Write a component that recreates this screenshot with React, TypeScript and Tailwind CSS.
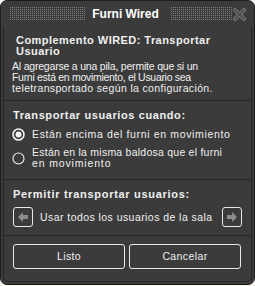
import React from "react";

const font = { fontFamily: '"Liberation Sans", Arial, sans-serif' };

function Stripe({ w }: { w: string }) {
  return (
    <div
      className={`${w} h-[14px] bg-[conic-gradient(#7c7c7c_25%,transparent_0)] bg-[length:2px_2px]`}
    />
  );
}

function Radio({ on }: { on: boolean }) {
  return (
    <svg width="13" height="13" viewBox="0 0 13 13" className="shrink-0">
      <circle cx="6.5" cy="6.5" r="5.5" fill="none" stroke="#f2f2f2" strokeWidth={on ? 1.6 : 1.1} />
      {on && <circle cx="6.5" cy="6.5" r="3" fill="#f2f2f2" />}
    </svg>
  );
}

function ArrowBtn({ dir }: { dir: "l" | "r" }) {
  return (
    <div className="w-[20px] h-[20px] shrink-0 border border-[#e8e8e8] rounded-[3px] flex items-center justify-center">
      <svg width="10" height="10" viewBox="0 0 10 10">
        {dir === "l" ? (
          <polygon points="0,5 5,0 5,3 10,3 10,7 5,7 5,10" fill="#8c8c8c" />
        ) : (
          <polygon points="10,5 5,0 5,3 0,3 0,7 5,7 5,10" fill="#8c8c8c" />
        )}
      </svg>
    </div>
  );
}

export default function App() {
  return (
    <div className="w-[255px] h-[286px] bg-[#f4f2ea]" style={font}>
      <div className="w-[255px] h-[285px] rounded-[7px] bg-[#3b3b3b] border border-[#1e1e1e] flex flex-col overflow-hidden text-[#f0f0f0]">
        {/* header */}
        <div className="h-[26px] flex items-center pl-[8px] pr-[8px] shrink-0">
          <Stripe w="w-[76px]" />
          <div className="flex-1 text-center text-[12px] font-bold text-white leading-none pr-[4px]">Furni Wired</div>
          <Stripe w="w-[62px]" />
          <svg width="13" height="13" viewBox="0 0 13 13" className="ml-[1px]">
            <path d="M2 2 L11 11 M11 2 L2 11" stroke="#6e6e6e" strokeWidth="4" strokeLinecap="square" />
            <path d="M2 2 L11 11 M11 2 L2 11" stroke="#4a4a4a" strokeWidth="1.5" strokeLinecap="square" />
          </svg>
        </div>
        {/* body */}
        <div className="flex-1 mx-[2px] mb-[2px] border-x border-b border-[#262626] rounded-b-[5px] flex flex-col">
          <div className="pl-[8px] pt-[8px] pb-[6px]">
            <div className="text-[11px] font-bold leading-[11px] pl-[4px] whitespace-nowrap">
              <div className="tracking-[0.45px]">Complemento WIRED: Transportar</div>
              <div className="tracking-[0.45px]">Usuario</div>
            </div>
            <div className="text-[10.5px] leading-[11px] mt-[4px] whitespace-nowrap">
              <div className="tracking-[-0.2px]">Al agregarse a una pila, permite que si un</div>
              <div className="tracking-[-0.3px]">Furni está en movimiento, el Usuario sea</div>
              <div className="tracking-[0.35px]">teletransportado según la configuración.</div>
            </div>
          </div>
          <div className="h-px bg-[#262626]" />
          <div className="pl-[9px] pt-[9px] h-[78px]">
            <div className="text-[11px] font-bold leading-[11px] tracking-[0.6px]">Transportar usuarios cuando:</div>
            <div className="flex items-center gap-[7px] mt-[7px] -ml-[1px]">
              <Radio on />
              <div className="text-[10.5px] leading-[11px] tracking-[0.65px] whitespace-nowrap">Están encima del furni en movimiento</div>
            </div>
            <div className="flex items-center gap-[7px] mt-[6px] -ml-[1px]">
              <Radio on={false} />
              <div className="text-[10.5px] leading-[11px] whitespace-nowrap">
                <div className="tracking-[0.24px]">Están en la misma baldosa que el furni</div>
                <div className="tracking-[0.85px]">en movimiento</div>
              </div>
            </div>
          </div>
          <div className="h-px bg-[#262626]" />
          <div className="px-[9px] pt-[9px] h-[55px]">
            <div className="text-[11px] font-bold leading-[11px] tracking-[0.7px]">Permitir transportar usuarios:</div>
            <div className="flex items-center mt-[7px]">
              <ArrowBtn dir="l" />
              <div className="flex-1 ml-[7px] text-[10.5px] leading-[11px] tracking-[0.44px] whitespace-nowrap">Usar todos los usuarios de la sala</div>
              <ArrowBtn dir="r" />
            </div>
          </div>
          <div className="h-px bg-[#262626]" />
          <div className="pl-[9px] pr-[10px] pt-[8px] flex gap-[4px]">
            <button className="flex-1 h-[25px] border border-[#e8e8e8] rounded-[3px] text-[10.5px] tracking-[0.4px] text-[#f0f0f0]">Listo</button>
            <button className="flex-1 h-[25px] border border-[#e8e8e8] rounded-[3px] text-[10.5px] tracking-[0.4px] text-[#f0f0f0]">Cancelar</button>
          </div>
        </div>
      </div>
    </div>
  );
}
